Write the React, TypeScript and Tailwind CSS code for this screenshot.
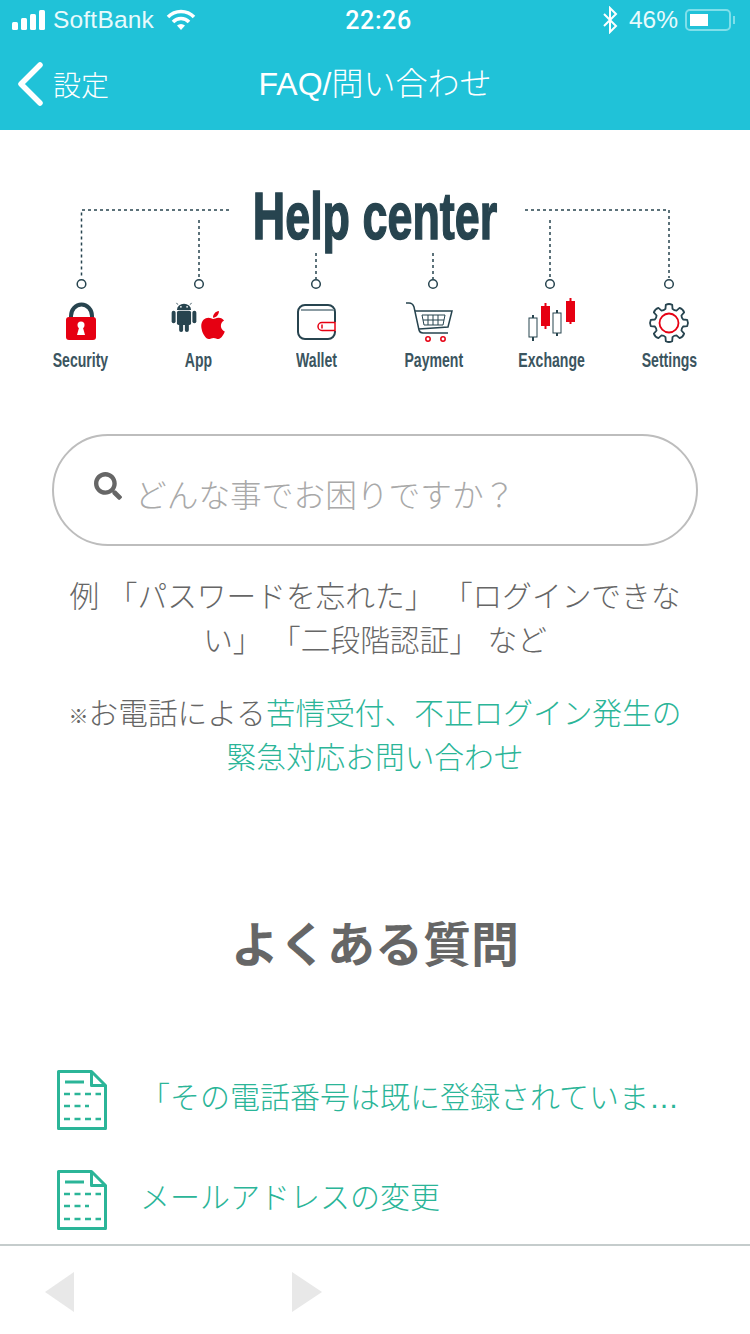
import { FaApple, FaSearch } from 'react-icons/fa';

const NAVY = '#27444f';
const RED = '#e60012';

function SecurityIcon() {
  return (
    <svg width="60" height="50" viewBox="0 0 60 50">
      <path d="M20 20v-3a10 11 0 0 1 21 0v3" fill="none" stroke={NAVY} strokeWidth="4" />
      <rect x="15" y="18" width="30" height="23" rx="3" fill={RED} />
      <circle cx="30" cy="26" r="3.500" fill="#fff" />
      <path d="M28.500 27h3l2.500 9h-8z" fill="#fff" />
    </svg>
  );
}

function AppIcon() {
  return (
    <div className="relative w-[60px] h-[50px]">
      <svg width="26" height="30" viewBox="0 0 28 34" className="absolute left-[3px] top-[3px]" fill={NAVY}>
        <path d="M6 9a8 7 0 0 1 16 0z" />
        <path d="M7 3 5.500 1M21 3l1.500-2" stroke={NAVY} strokeWidth="1" />
        <rect x="6" y="10" width="16" height="16" rx="2" />
        <rect x="0" y="10" width="4.500" height="14" rx="2.200" />
        <rect x="23.500" y="10" width="4.500" height="14" rx="2.200" />
        <rect x="8.500" y="22" width="4.500" height="12" rx="2.200" />
        <rect x="15" y="22" width="4.500" height="12" rx="2.200" />
        <circle cx="10.500" cy="5.500" r="1" fill="#fff" />
        <circle cx="17.500" cy="5.500" r="1" fill="#fff" />
      </svg>
      <FaApple className="absolute left-[29px] top-[10px] text-[#e60012]" size={32} />
    </div>
  );
}

function WalletIcon() {
  return (
    <svg width="60" height="50" viewBox="0 0 60 50" fill="none">
      <path d="M49 32v1a7 7 0 0 1-7 7H19a7 7 0 0 1-7-7V13a7 7 0 0 1 7-7h23a7 7 0 0 1 7 7v10" stroke={NAVY} strokeWidth="2" />
      <path d="M15 11h33" stroke="#8b9ca3" strokeWidth="2" />
      <path d="M49 23.500H36a4 4 0 0 0 0 8h13z" fill="#fff" stroke={RED} strokeWidth="1.500" />
      <path d="M36 25.500v4" stroke={RED} strokeWidth="1.500" />
    </svg>
  );
}

function PaymentIcon() {
  return (
    <svg width="60" height="50" viewBox="0 0 60 50" fill="none" stroke={NAVY}>
      <path d="M2 4h3c3 0 4 1 5 4l5 23c0.500 2 2 3 4 3h25" strokeWidth="1.500" />
      <path d="M11 12h37l-4 16-29 2" strokeWidth="1.500" />
      <path d="M18 16h23l-2 10H20zM19 21h21M24 16v10M29 16v10M34 16v10" strokeWidth="1" />
      <circle cx="24" cy="40" r="2.200" stroke={RED} strokeWidth="1.500" />
      <circle cx="39" cy="40" r="2.200" stroke={RED} strokeWidth="1.500" />
    </svg>
  );
}

function ExchangeIcon() {
  return (
    <svg width="60" height="50" viewBox="0 0 60 50" fill="none" className="overflow-visible">
      <path d="M12 16v26" stroke={NAVY} strokeWidth="2" />
      <path d="M24.500 4v26" stroke={RED} strokeWidth="2" />
      <path d="M36 11v26" stroke={NAVY} strokeWidth="2" />
      <path d="M49.500 -1v26" stroke={RED} strokeWidth="2" />
      <rect x="8" y="19" width="8" height="19" fill="#fff" stroke={NAVY} />
      <rect x="20" y="7" width="9" height="20" fill={RED} />
      <rect x="32" y="14" width="8" height="20" fill="#fff" stroke={NAVY} />
      <rect x="45" y="2" width="9" height="21" fill={RED} />
    </svg>
  );
}

// outline of an eight-toothed gear around (cx, cy)
function gearPath(cx: number, cy: number) {
  const pt = (r: number, deg: number) => {
    const a = (deg * Math.PI) / 180;
    return `${(cx + r * Math.cos(a)).toFixed(2)} ${(cy + r * Math.sin(a)).toFixed(2)}`;
  };
  const parts: string[] = [];
  for (let i = 0; i < 8; i++) {
    const c = i * 45;
    parts.push(`${i === 0 ? 'M' : 'L'}${pt(14.5, c - 14)}`);
    parts.push(`L${pt(18.5, c - 10)}`);
    parts.push(`Q${pt(19.8, c)} ${pt(18.5, c + 10)}`);
    parts.push(`L${pt(14.5, c + 14)}`);
    parts.push(`Q${pt(13.5, c + 22.5)} ${pt(14.5, c + 31)}`);
  }
  return parts.join(' ') + 'Z';
}

function SettingsIcon() {
  return (
    <svg width="60" height="50" viewBox="0 0 60 50" fill="none">
      <path d={gearPath(30, 24)} stroke={NAVY} strokeWidth="1.800" strokeLinejoin="round" />
      <circle cx="30" cy="24" r="9.500" stroke={RED} strokeWidth="1.800" />
    </svg>
  );
}

function DocIcon() {
  return (
    <svg width="50" height="60" viewBox="0 0 50 60" fill="none" stroke="#2bb598" className="shrink-0">
      <path d="M1.500 1.500h33l14 14v43h-47z" strokeWidth="3" strokeLinejoin="round" />
      <path d="M34.500 1.500v14h14" strokeWidth="3" strokeLinejoin="round" />
      <path d="M8 12h19" strokeWidth="3" />
      <path d="M7 24h37M7 36h25M7 49h37" strokeWidth="2.500" strokeDasharray="6 4.500" />
    </svg>
  );
}

const topics = [
  { label: 'Security', icon: <SecurityIcon /> },
  { label: 'App', icon: <AppIcon /> },
  { label: 'Wallet', icon: <WalletIcon /> },
  { label: 'Payment', icon: <PaymentIcon /> },
  { label: 'Exchange', icon: <ExchangeIcon /> },
  { label: 'Settings', icon: <SettingsIcon /> },
];

const faqs = ['「その電話番号は既に登録されています」', 'メールアドレスの変更'];

export default function App() {
  return (
    <div lang="ja" className="w-[750px] h-[1334px] flex flex-col bg-white overflow-hidden font-['Noto_Sans_CJK_JP',sans-serif]">
      {/* Header */}
      <header className="h-[130px] shrink-0 bg-[#20c2d8] text-white">
        <div className="h-[40px] pl-[12px] pr-[12px] grid grid-cols-3 items-center font-['Liberation_Sans','Noto_Sans_CJK_JP',sans-serif]">
          <div className="flex items-center">
            <svg width="34" height="20" viewBox="0 0 34 20" fill="#fff">
              <rect x="0" y="12" width="6" height="8" rx="1.500" />
              <rect x="9" y="8" width="6" height="12" rx="1.500" />
              <rect x="18" y="4" width="6" height="16" rx="1.500" />
              <rect x="27" y="0" width="6" height="20" rx="1.500" />
            </svg>
            <span className="ml-[7px] text-[24.5px] leading-none tracking-[0.2px] text-[#e8fafc]">SoftBank</span>
            <svg width="30" height="22" viewBox="0 0 30 22" fill="none" stroke="#fff" strokeWidth="3.500" className="ml-[12px]">
              <path d="M2 8a18 18 0 0 1 26 0" />
              <path d="M7 13a11 11 0 0 1 16 0" />
              <path d="M15 21 11 16.500a6 6 0 0 1 8 0z" fill="#fff" stroke="none" />
            </svg>
          </div>
          <div className="pl-[7px] text-center text-[25px] leading-none font-medium tracking-[0.6px] font-['Roboto',sans-serif]">22:26</div>
          <div className="flex items-center justify-end">
            <svg width="18" height="28" viewBox="0 0 18 28" fill="none" stroke="#fff" strokeWidth="2">
              <path d="M3 8 15 20l-6 6V2l6 6L3 20" />
            </svg>
            <span className="ml-[10px] text-[24.5px] leading-none text-[#e8fafc]">46%</span>
            <div className="ml-[7px] w-[46px] h-[22px] rounded-[5px] border-2 border-[#7fdfea] p-[3px]">
              <div className="w-[50%] h-full bg-white" />
            </div>
            <div className="ml-[2px] mr-[3px] w-[2px] h-[8px] bg-[#7fdfea]" />
          </div>
        </div>
        <div className="h-[90px] px-[18px] grid grid-cols-3 items-center pb-[2px]">
          <div className="flex items-center">
            <svg width="26" height="44" viewBox="0 0 26 44" fill="none" stroke="#fff" strokeWidth="5.500" strokeLinecap="round" strokeLinejoin="round">
              <path d="M22 3 3 22l19 19" />
            </svg>
            <span className="ml-[9px] text-[28px] leading-none font-light">設定</span>
          </div>
          <div className="text-center text-[32px] leading-none font-light whitespace-nowrap font-['Liberation_Sans','Noto_Sans_CJK_JP',sans-serif]">FAQ/問い合わせ</div>
        </div>
      </header>

      {/* Content */}
      <main className="flex-1 min-h-0 overflow-hidden">
        <section className="relative mt-[50px] h-[110px] px-[22px]">
          <svg width="750" height="110" viewBox="0 0 750 110" fill="none" stroke={NAVY} className="absolute left-0 top-0">
            <g strokeDasharray="3 3" strokeWidth="1.500">
              <path d="M229 30H81.500v68" />
              <path d="M199 40v58" />
              <path d="M316 73v26" />
              <path d="M433 73v26" />
              <path d="M550 40v58" />
              <path d="M525 30h144v68" />
            </g>
            <g strokeWidth="1.500" fill="#fff">
              <circle cx="81.500" cy="104" r="4.300" />
              <circle cx="199" cy="104" r="4.300" />
              <circle cx="316" cy="104" r="4.300" />
              <circle cx="433" cy="104" r="4.300" />
              <circle cx="550" cy="104" r="4.300" />
              <circle cx="669" cy="104" r="4.300" />
            </g>
          </svg>
          <h2 className="absolute left-0 right-0 -top-[2px] text-center text-[66px] leading-[76px] font-bold text-[#27444f] scale-x-[0.68] [-webkit-text-stroke:1.5px_#27444f] font-['Liberation_Sans',sans-serif]">
            Help center
          </h2>
        </section>

        <section className="px-[22px] grid grid-cols-6 mt-[9px]">
          {topics.map((t) => (
            <div key={t.label} className="flex flex-col items-center">
              <div className="h-[50px] flex items-start justify-center">{t.icon}</div>
              <span className="mt-[-1px] text-[21px] leading-[24px] font-bold text-[#3b5560] scale-x-[0.67] whitespace-nowrap font-['Liberation_Sans',sans-serif]">
                {t.label}
              </span>
            </div>
          ))}
        </section>

        <div className="mx-[52px] mt-[62px] h-[112px] rounded-full border-2 border-[#bdbdbd] flex items-center pl-[40px]">
          <FaSearch size={28} className="mb-[8px] text-[#666] shrink-0" />
          <span className="ml-[13px] mt-[8px] text-[31.7px] leading-none text-[#a9a9a9] font-light">どんな事でお困りですか？</span>
        </div>

        <p className="mt-[27px] px-[66px] text-center text-[29.7px] leading-[44px] font-light text-[#666] [word-spacing:2px]">
          例 「パスワードを忘れた」 「ログインできない」 「二段階認証」 など
        </p>

        <p className="mt-[29px] px-[60px] text-center text-[29.7px] leading-[44px] font-light text-[#666]">
          <span className="text-[20px] leading-none">※</span>お電話による<span className="text-[#2bb598]">苦情受付、不正ログイン発生の緊急対応お問い合わせ</span>
        </p>

        <h3 className="mt-[133px] text-center text-[48px] leading-[60px] font-bold text-[#666]">よくある質問</h3>

        <ul className="mt-[99px] pl-[57px] pr-[68px] flex flex-col gap-[40px]">
          {faqs.map((q) => (
            <li key={q} className="flex items-center h-[60px]">
              <DocIcon />
              <span className="ml-[33px] pb-[4px] truncate text-[30px] leading-[46px] font-light text-[#2bb598] font-['Liberation_Sans','Noto_Sans_CJK_JP',sans-serif]">{q}</span>
            </li>
          ))}
        </ul>
      </main>

      {/* Toolbar */}
      <footer className="h-[90px] shrink-0 border-t-2 border-[#c5cccc] flex items-center pl-[45px] pt-[3px]">
        <div className="w-0 h-0 border-y-[20px] border-y-transparent border-r-[29px] border-r-[#e8e8e8]" />
        <div className="ml-[218px] w-0 h-0 border-y-[20px] border-y-transparent border-l-[30px] border-l-[#e8e8e8]" />
      </footer>
    </div>
  );
}
